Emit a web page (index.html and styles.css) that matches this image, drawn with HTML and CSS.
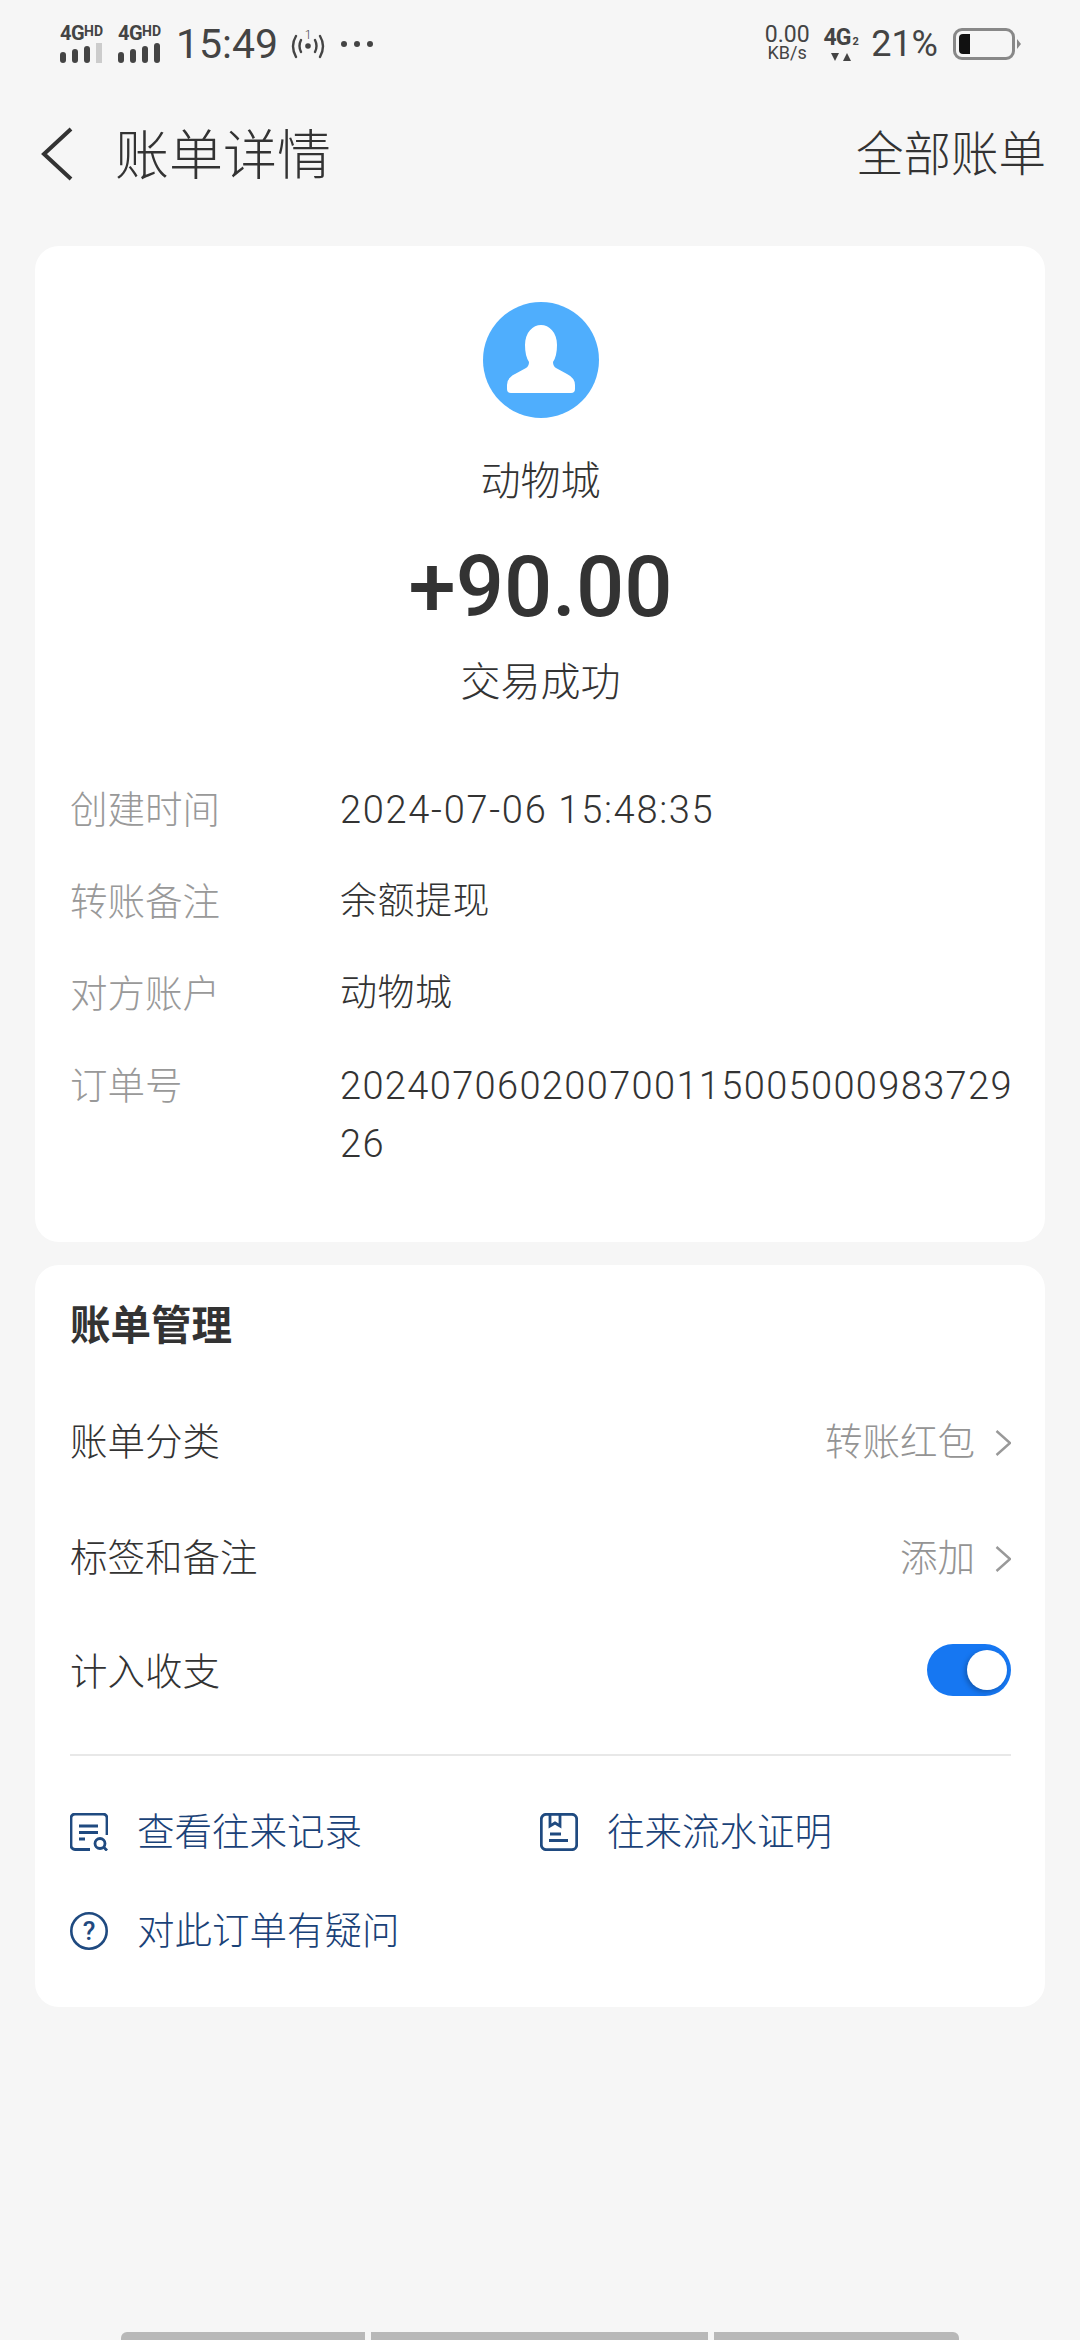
FILE: index.html
```html
<!DOCTYPE html>
<html lang="zh-CN">
<head>
    <meta charset="UTF-8">
    <meta name="viewport" content="width=device-width, initial-scale=1.0">
    <title>账单详情</title>
    <link rel="stylesheet" href="styles.css">
</head>
<body>

<!-- Status bar -->
<div class="status-bar">
    <div class="status-left">
        <div class="sim">
            <div class="sim-label"><span class="sim-g">4G</span><span class="sim-hd">HD</span></div>
            <div class="sim-bars"><i class="b1"></i><i class="b2"></i><i class="b3"></i><i class="b4 off"></i></div>
        </div>
        <div class="sim">
            <div class="sim-label"><span class="sim-g">4G</span><span class="sim-hd">HD</span></div>
            <div class="sim-bars"><i class="b1"></i><i class="b2"></i><i class="b3"></i><i class="b4"></i></div>
        </div>
        <span class="clock">15:49</span>
        <svg class="hotspot" width="34" height="32" viewBox="0 0 34 32">
            <text x="17" y="11" text-anchor="middle" class="hotspot-num">1</text>
            <circle cx="17" cy="18" r="2.8" fill="#444"/>
            <path d="M10 12q-3 6 0 12M24 12q3 6 0 12M5 8q-6 10 0 21M29 8q6 10 0 21" fill="none" stroke="#444" stroke-width="2.4" stroke-linecap="round"/>
        </svg>
        <div class="dots"><i></i><i></i><i></i></div>
    </div>
    <div class="status-right">
        <div class="speed"><span class="speed-num">0.00</span><span class="speed-unit">KB/s</span></div>
        <div class="net">
            <div class="net-label">4G<small>2</small></div>
            <svg width="20" height="9" viewBox="0 0 20 9"><path d="M0 0h8l-4 8zM12 8l4-8 4 8z" fill="#444"/></svg>
        </div>
        <span class="battery-pct">21%</span>
        <div class="battery"><div class="battery-fill"></div></div>
        <div class="battery-nub"></div>
    </div>
</div>

<!-- Header -->
<div class="header">
    <svg class="back" width="32" height="54" viewBox="0 0 32 54"><path d="M30 2 3 27l27 25" fill="none" stroke="#333" stroke-width="4"/></svg>
    <span class="header-title">账单详情</span>
    <span class="header-link">全部账单</span>
</div>

<!-- Bill summary -->
<div class="card card-detail">
    <svg class="avatar" width="116" height="116" viewBox="0 0 116 116">
        <circle cx="58" cy="58" r="58" fill="#4faefd"/>
        <path d="M28 91H88Q92 91 92 87V83Q92 76 84 72L73 66Q70 64 70 60Q74 54 74 43C74 30 66 23 58 23C50 23 42 30 42 43Q42 54 46 60Q46 64 43 66L32 72Q24 76 24 83V87Q24 91 28 91Z" fill="#fff"/>
    </svg>
    <div class="payee">动物城</div>
    <div class="amount">+90.00</div>
    <div class="result">交易成功</div>

    <div class="info">
        <div class="info-row"><span class="info-label">创建时间</span><span class="info-value info-date">2024-07-06 15:48:35</span></div>
        <div class="info-row"><span class="info-label">转账备注</span><span class="info-value">余额提现</span></div>
        <div class="info-row"><span class="info-label">对方账户</span><span class="info-value">动物城</span></div>
        <div class="info-row"><span class="info-label">订单号</span><span class="info-value info-num">20240706020070011500500098372926</span></div>
    </div>
</div>

<!-- Bill management -->
<div class="card card-manage">
    <div class="manage-title">账单管理</div>
    <div class="manage-row">
        <span>账单分类</span>
        <span class="manage-value">转账红包
            <svg width="16" height="26" viewBox="0 0 16 26"><path d="M1.5 1 15 13 1.5 25" fill="none" stroke="#999" stroke-width="2.4"/></svg>
        </span>
    </div>
    <div class="manage-row">
        <span>标签和备注</span>
        <span class="manage-value">添加
            <svg width="16" height="26" viewBox="0 0 16 26"><path d="M1.5 1 15 13 1.5 25" fill="none" stroke="#999" stroke-width="2.4"/></svg>
        </span>
    </div>
    <div class="manage-row row-switch">
        <span>计入收支</span>
        <div class="switch"><div class="knob"></div></div>
    </div>

    <div class="links">
        <div class="link">
            <svg width="38" height="38" viewBox="0 0 38 38" fill="none" stroke="#1f4a80" stroke-width="2.8">
                <path d="M20 36.500H5a4 4 0 0 1-4-4V5a4 4 0 0 1 4-4h28a4 4 0 0 1 4 4v17"/>
                <path d="M9 13h19M9 19.500h19M9 26h6"/>
                <circle cx="30" cy="30.500" r="5"/>
                <path d="M33.500 34l3.500 3.500"/>
            </svg>
            <span>查看往来记录</span>
        </div>
        <div class="link">
            <svg width="38" height="38" viewBox="0 0 38 38" fill="none" stroke="#1f4a80" stroke-width="2.8">
                <rect x="1.300" y="1.300" width="35.400" height="35.400" rx="5"/>
                <path d="M10 1.500V13l5-3 5 3V1.500"/>
                <path d="M10 21h11M9 27.500h19"/>
            </svg>
            <span>往来流水证明</span>
        </div>
        <div class="link">
            <svg width="38" height="38" viewBox="0 0 38 38">
                <circle cx="19" cy="19" r="17.700" fill="none" stroke="#1f4a80" stroke-width="2.600"/>
                <text x="19" y="28" text-anchor="middle" class="help-mark">?</text>
            </svg>
            <span>对此订单有疑问</span>
        </div>
    </div>
</div>

<!-- Bottom strip -->
<div class="bottom-strip">
    <div class="strip strip-a"></div>
    <div class="strip strip-b"></div>
    <div class="strip strip-c"></div>
</div>

</body>
</html>
```

FILE: styles.css
```css
* { box-sizing: border-box; }
html, body { margin: 0; padding: 0; }
body { width: 1080px; height: 2340px; background: #f6f6f6; color: #333; font-family: Roboto, "Noto Sans CJK SC", sans-serif; font-weight: 300; display: flex; flex-direction: column; overflow: hidden; }

/* status bar */
.status-bar { height: 88px; padding: 20px 59px 0 60px; display: flex; justify-content: space-between; align-items: flex-start; color: #444; }
.status-left, .status-right { display: flex; align-items: center; height: 48px; }
.sim { width: 46px; margin-right: 12px; }
.sim-label { display: flex; align-items: flex-start; height: 17px; font-weight: 700; line-height: 17px; }
.sim-g { font-size: 20px; letter-spacing: -0.5px; }
.sim-hd { font-size: 14px; line-height: 13px; }
.sim-bars { display: flex; align-items: flex-end; gap: 6px; height: 20px; margin-top: 1px; }
.sim-bars i { width: 6px; background: #444; border-radius: 3px; }
.sim-bars .b1 { height: 11px; }
.sim-bars .b2 { height: 14px; }
.sim-bars .b3 { height: 17px; }
.sim-bars .b4 { height: 20px; }
.sim-bars .off { background: #ccc; border-radius: 0; }
.clock { font-size: 41px; font-weight: 400; }
.hotspot { margin-left: 13px; }
.hotspot-num { font-family: Roboto, sans-serif; font-size: 12px; fill: #444; }
.dots { display: flex; gap: 7px; margin-left: 16px; }
.dots i { width: 6px; height: 6px; background: #444; border-radius: 50%; }
.speed { display: flex; flex-direction: column; align-items: center; width: 46px; line-height: 18px; font-weight: 400; }
.speed-num { font-size: 23px; }
.speed-unit { font-size: 18px; }
.net { margin-left: 14px; width: 34px; display: flex; flex-direction: column; align-items: center; }
.net-label { font-size: 23px; font-weight: 700; line-height: 22px; letter-spacing: -1px; }
.net-label small { font-size: 11px; margin-left: 2px; letter-spacing: 0; }
.battery-pct { font-size: 36px; font-weight: 400; margin-left: 13px; }
.battery { width: 62px; height: 32px; margin-left: 15px; border: 3px solid #888; border-radius: 9px; padding: 3px; }
.battery-fill { width: 11px; height: 100%; background: #111; border-radius: 4px 0 0 4px; }
.battery-nub { width: 0; height: 0; border-left: 4px solid #888; border-top: 5px solid transparent; border-bottom: 5px solid transparent; margin-left: 2px; }

/* header */
.header { height: 133px; padding: 0 34px 0 41px; display: flex; align-items: center; }
.back { margin-top: -2px; }
.header-title { font-size: 54px; margin-left: 42px; flex: 1; line-height: 60px; margin-top: 4px; }
.header-link { font-size: 47.500px; line-height: 60px; margin-top: 1px; }

/* cards */
.card { margin: 25px 35px 0; background: #fff; border-radius: 24px; padding: 0 34px 0 35px; }
.card-detail { height: 996px; padding-top: 56px; display: flex; flex-direction: column; align-items: center; }
.avatar { display: block; flex: none; }
.payee { font-size: 40px; line-height: 58px; margin-top: 35px; }
.amount { font-size: 85px; font-weight: 500; line-height: 100px; margin-top: 26px; }
.result { font-size: 40px; line-height: 58px; margin-top: 17px; }

.info { width: 100%; margin-top: 69px; display: flex; flex-direction: column; gap: 34px; }
.info-row { display: flex; font-size: 37px; line-height: 58px; }
.info-label { width: 270px; flex: none; color: #999; font-size: 37.500px; }
.info-value { flex: 1; word-break: break-all; letter-spacing: 0.500px; }
.info-date { font-size: 38px; letter-spacing: 1.700px; }
.info-num { font-size: 38px; letter-spacing: 1.350px; margin-right: -10px; }

.card-manage { height: 742px; margin-top: 23px; padding-top: 33px; }
.manage-title { font-size: 40.500px; font-weight: 700; line-height: 56px; }
.manage-row { height: 116px; display: flex; justify-content: space-between; align-items: center; font-size: 37.500px; }
.manage-row > span { margin-top: -3px; }
.manage-title + .manage-row { margin-top: 28px; }
.manage-value { display: flex; align-items: center; gap: 20px; color: #949494; }
.manage-value svg { margin-top: 9px; }
.row-switch { height: 112px; }
.switch { width: 84px; height: 52px; background: #1677f2; border-radius: 26px; padding: 6px 4px; display: flex; justify-content: flex-end; }
.knob { width: 40px; height: 40px; background: #fff; border-radius: 50%; box-shadow: -2px 2px 5px rgba(0, 0, 0, 0.25); }

.links { border-top: 2px solid #e8e8e8; margin-top: 28px; padding-top: 26px; display: grid; grid-template-columns: 470px 1fr; grid-auto-rows: 99px; color: #1a4278; font-size: 37.500px; }
.link { display: flex; align-items: center; gap: 29px; }
.link svg { flex: none; }
.link span { margin-top: -6px; }
.help-mark { font-family: Roboto, sans-serif; font-size: 26px; font-weight: 500; fill: #1f4a80; }

/* bottom strip */
.bottom-strip { margin-top: auto; padding-left: 121px; display: flex; gap: 6px; height: 8px; }
.strip { height: 8px; background: #b8b8b8; }
.strip-a { width: 244px; border-radius: 6px 0 0 0; }
.strip-b { width: 337px; }
.strip-c { width: 245px; border-radius: 0 6px 0 0; }
```
